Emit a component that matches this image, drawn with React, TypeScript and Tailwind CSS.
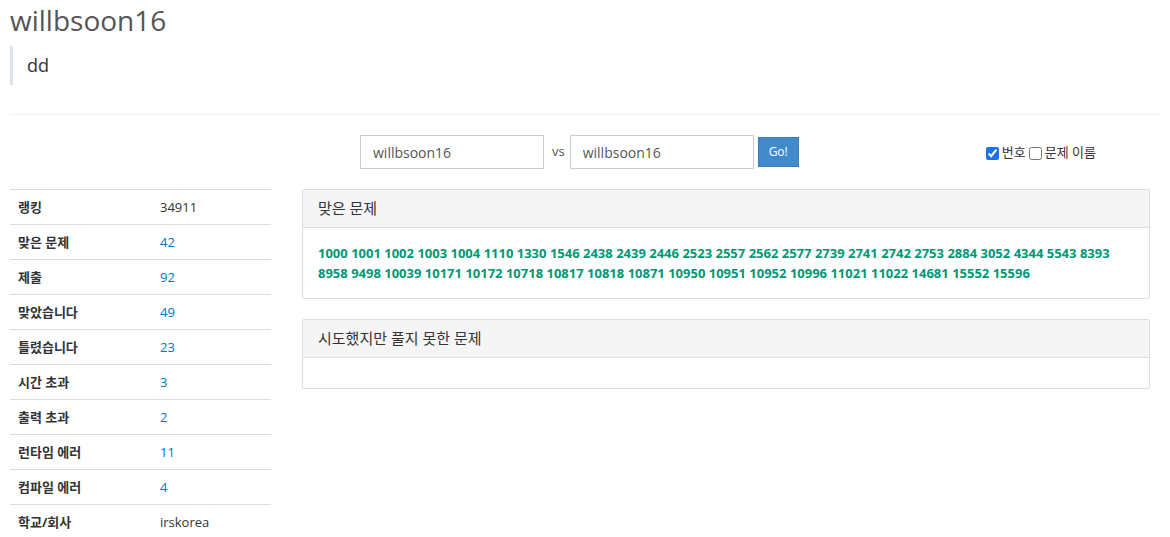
import { useState } from 'react'

const stats: { label: string; value: string; link?: boolean }[] = [
  { label: '랭킹', value: '34911' },
  { label: '맞은 문제', value: '42', link: true },
  { label: '제출', value: '92', link: true },
  { label: '맞았습니다', value: '49', link: true },
  { label: '틀렸습니다', value: '23', link: true },
  { label: '시간 초과', value: '3', link: true },
  { label: '출력 초과', value: '2', link: true },
  { label: '런타임 에러', value: '11', link: true },
  { label: '컴파일 에러', value: '4', link: true },
  { label: '학교/회사', value: 'irskorea' },
]

const solved = [
  1000, 1001, 1002, 1003, 1004, 1110, 1330, 1546, 2438, 2439, 2446, 2523, 2557, 2562, 2577, 2739, 2741,
  2742, 2753, 2884, 3052, 4344, 5543, 8393, 8958, 9498, 10039, 10171, 10172, 10718, 10817, 10818, 10871,
  10950, 10951, 10952, 10996, 11021, 11022, 14681, 15552, 15596,
]

function Panel({ title, children }: { title: string; children?: React.ReactNode }) {
  return (
    <div className="border border-[#dddddd] rounded-[2px]">
      <div className="h-[38px] bg-[#f5f5f5] border-b border-[#dddddd] px-[15px] flex items-center text-[15px] text-[#333]">
        {title}
      </div>
      <div className="px-[15px] py-[15px] min-h-[30px]">{children}</div>
    </div>
  )
}

export default function App() {
  const [user1, setUser1] = useState('willbsoon16')
  const [user2, setUser2] = useState('willbsoon16')
  const [showNum, setShowNum] = useState(true)
  const [showName, setShowName] = useState(false)

  return (
    <div className="w-[1170px] bg-white text-[#333] font-['Open_Sans','Noto_Sans_CJK_KR',sans-serif] text-[13px]">
      <div className="px-[10px]">
        <h1 className="text-[28px] leading-[34px] text-[#555] pt-[3px]">willbsoon16</h1>
        <blockquote className="mt-[9px] border-l-[3px] border-[#dde3e8] pl-[14px] h-[39px] flex items-center text-[18px] text-[#333]">
          dd
        </blockquote>
        <hr className="mt-[29px] border-t border-[#eeeeee]" />

        <div className="flex items-center mt-[20px] h-[34px]">
          <div className="w-[350px]" />
          <input
            className="w-[184px] h-[34px] border border-[#cccccc] px-[12px] text-[14px] text-[#555] outline-none"
            value={user1}
            onChange={(e) => setUser1(e.target.value)}
          />
          <span className="ml-[8px] mr-[5px] text-[13px] text-[#555]">vs</span>
          <input
            className="w-[184px] h-[34px] border border-[#cccccc] px-[12px] text-[14px] text-[#555] outline-none"
            value={user2}
            onChange={(e) => setUser2(e.target.value)}
          />
          <button className="ml-[4px] w-[41px] h-[30px] bg-[#428bca] border border-[#357ebd] text-white text-[12px]">
            Go!
          </button>
          <div className="ml-auto mr-[64px] flex items-center gap-[3px] text-[13px] text-[#333] pt-[2px]">
            <input
              type="checkbox"
              checked={showNum}
              onChange={(e) => setShowNum(e.target.checked)}
              className="w-[13px] h-[13px] m-0 accent-[#1a73e8]"
            />
            <span>번호</span>
            <input
              type="checkbox"
              checked={showName}
              onChange={(e) => setShowName(e.target.checked)}
              className="w-[13px] h-[13px] m-0"
            />
            <span>문제 이름</span>
          </div>
        </div>

        <div className="flex mt-[20px]">
          <div className="w-[261px]">
            <table className="w-full border-collapse">
              <tbody>
                {stats.map((s) => (
                  <tr key={s.label} className="border-t border-[#dddddd] h-[35px]">
                    <th className="text-left font-bold pl-[8px] pt-[1px] w-[150px] text-[13px] text-[#333]">{s.label}</th>
                    <td className={s.link ? 'pt-[1px] text-[#0076c0]' : 'pt-[1px] text-[#333]'}>{s.value}</td>
                  </tr>
                ))}
              </tbody>
            </table>
          </div>
          <div className="ml-[31px] w-[848px] flex flex-col gap-[20px]">
            <Panel title="맞은 문제">
              <div className="text-[13px] leading-[20px] font-bold text-[#009874]">
                {solved.map((n) => (
                  <span key={n}>
                    <a href="#" className="text-[#009874]">{n}</a>{' '}
                  </span>
                ))}
              </div>
            </Panel>
            <Panel title="시도했지만 풀지 못한 문제" />
          </div>
        </div>
      </div>
    </div>
  )
}
